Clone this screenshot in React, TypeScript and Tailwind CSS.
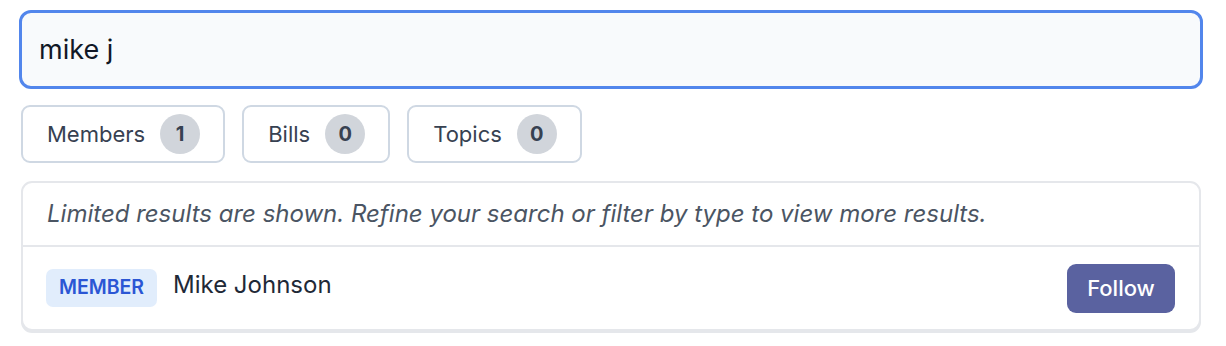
import {useState} from 'react'

type Filter = {label: string; count: number}

const filters: Filter[] = [
  {label: 'Members', count: 1},
  {label: 'Bills', count: 0},
  {label: 'Topics', count: 0},
]

const FilterButton = ({label, count}: Filter) => (
  <button
    type="button"
    className="flex h-[58px] items-center gap-[15px] rounded-[9px] border-2 border-[#cfd8e3] bg-white pl-[24px] pr-[23px] text-[22px] text-[#374151]"
  >
    <span>{label}</span>
    <span className="flex h-[40px] w-[40px] items-center justify-center rounded-full bg-[#d1d5db] text-[20px] font-bold text-[#374151]">
      {count}
    </span>
  </button>
)

const App = () => {
  const [query, setQuery] = useState('mike j')

  return (
    <div className="min-h-screen bg-white pt-[10px] pl-[19px] pr-[23px] font-['Inter',sans-serif]">
      <input
        value={query}
        onChange={e => setQuery(e.target.value)}
        className="block h-[79px] w-full rounded-[12px] border-[3px] border-[#5286ec] bg-[#f8fafc] px-[17px] text-[27px] text-[#111827] outline-none"
        type="text"
      />

      <div className="mt-[16px] flex gap-[17px] px-[2px]">
        {filters.map(f => (
          <FilterButton key={f.label} {...f} />
        ))}
      </div>

      <div className="mx-[2px] mt-[18px] rounded-[11px] border-2 border-[#e5e7eb] bg-white shadow-[0_2px_0_#e5e7eb]">
        <div className="flex h-[64px] items-center border-b-2 border-[#e5e7eb] px-[24px] text-[24px] italic text-[#4b5563]">
          Limited results are shown. Refine your search or filter by type to view more results.
        </div>
        <div className="flex h-[82px] items-center pl-[23px] pr-[24px]">
          <span className="flex h-[38px] w-[111px] items-center justify-center rounded-[7px] bg-[#e1edfc] text-[19.5px] font-semibold text-[#2b56d4]">
            MEMBER
          </span>
          <span className="-mt-[6px] ml-[16px] text-[24px] text-[#1f2937]">Mike Johnson</span>
          <button
            type="button"
            className="ml-auto h-[49px] w-[108px] rounded-[9px] bg-[#5a62a0] text-[22px] font-medium text-white"
          >
            Follow
          </button>
        </div>
      </div>
    </div>
  )
}

export default App
